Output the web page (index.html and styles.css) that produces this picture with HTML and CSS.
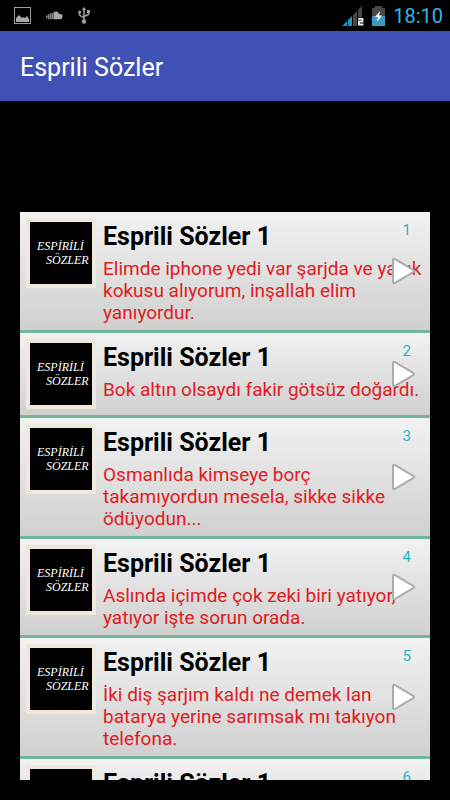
FILE: index.html
```html
<!DOCTYPE html>
<html lang="tr">
<head>
<meta charset="utf-8">
<meta name="viewport" content="width=device-width, initial-scale=1">
<title>Esprili Sözler</title>
<link rel="stylesheet" href="styles.css">
</head>
<body>
<svg class="defs" width="0" height="0" aria-hidden="true">
  <symbol id="play" viewBox="0 0 26 28"><path d="M3 3.2Q3 1.2 5 2.2L23.2 12.8Q25 14 23.2 15.2L5 25.8Q3 26.8 3 24.8Z" fill="#fff" stroke="#acacac" stroke-width="2" stroke-linejoin="round"/></symbol>
</svg>
<div class="status">
  <div class="status-left">
    <svg width="17" height="17" viewBox="0 0 17 17"><rect x=".5" y=".5" width="16" height="16" fill="none" stroke="#999"/><path d="M2 15V11L5 8L8 11L9 10L11 11L13 9L15 12V15Z" fill="#aaa"/></svg>
    <svg width="17" height="9" viewBox="0 0 17 9"><path d="M7.500 1.300Q12-.9 13 3Q16.700 2.700 16.600 5.500Q16.300 8.200 14 8.200H7.500Z" fill="#aaa"/><path d="M.7 4.500V7.200M2.600 3.300V8.200M4.600 2.300V8.200M6.500 2V8.200" stroke="#888" stroke-width="1.500"/></svg>
    <svg width="12" height="17" viewBox="0 0 12 17"><path d="M6 2V14M1.500 5V8L6 11M10.500 4.500V7.500L6 9.500" fill="none" stroke="#a0a0a0" stroke-width="1.500"/><path d="M6 0L8.200 3H3.800Z" fill="#a0a0a0"/><circle cx="6" cy="14.500" r="2.200" fill="#a0a0a0"/><circle cx="1.700" cy="5" r="1.500" fill="#a0a0a0"/><path d="M9 3h3v3H9Z" fill="#a0a0a0"/></svg>
  </div>
  <div class="status-right">
    <svg width="22" height="20" viewBox="0 0 22 20"><path d="M0 20L5 15V20ZM6 14L10 10V20H6Z" fill="#2492c8"/><path d="M11 9L15 5V20H11ZM16 4L20 0V20H16Z" fill="#484848"/><path d="M16 13H20.500V15.500H17V18.500H21.500" fill="none" stroke="#000" stroke-width="3"/><path d="M16 12.800H20.500V15.500H17V18.500H21.500" fill="none" stroke="#eee" stroke-width="1.800"/></svg>
    <svg width="13" height="20" viewBox="0 0 13 20"><path d="M3 0H10V2H13V10H0V2H3Z" fill="#484848"/><path d="M0 10H13V20H0Z" fill="#3a9cbd"/><path d="M8 5L3 11H6L5 16L10 9.500H7Z" fill="#fff"/></svg>
    <time>18:10</time>
  </div>
</div>
<header class="bar"><h1>Esprili Sözler</h1></header>
<main>
  <ul class="list">
    <li class="row">
      <div class="thumb"><span>ESPİRİLİ</span><span class="second">SÖZLER</span></div>
      <div class="body"><h2>Esprili Sözler 1</h2><p>Elimde iphone yedi var şarjda ve yanık kokusu alıyorum, inşallah elim yanıyordur.</p></div>
      <span class="num">1</span>
      <button class="play" aria-label="Oynat"><svg width="26" height="28"><use href="#play"/></svg></button>
    </li>
    <li class="row">
      <div class="thumb"><span>ESPİRİLİ</span><span class="second">SÖZLER</span></div>
      <div class="body"><h2>Esprili Sözler 1</h2><p>Bok altın olsaydı fakir götsüz doğardı.</p></div>
      <span class="num">2</span>
      <button class="play" aria-label="Oynat"><svg width="26" height="28"><use href="#play"/></svg></button>
    </li>
    <li class="row">
      <div class="thumb"><span>ESPİRİLİ</span><span class="second">SÖZLER</span></div>
      <div class="body"><h2>Esprili Sözler 1</h2><p>Osmanlıda kimseye borç takamıyordun mesela, sikke sikke ödüyodun...</p></div>
      <span class="num">3</span>
      <button class="play" aria-label="Oynat"><svg width="26" height="28"><use href="#play"/></svg></button>
    </li>
    <li class="row">
      <div class="thumb"><span>ESPİRİLİ</span><span class="second">SÖZLER</span></div>
      <div class="body"><h2>Esprili Sözler 1</h2><p>Aslında içimde çok zeki biri yatıyor, yatıyor işte sorun orada.</p></div>
      <span class="num">4</span>
      <button class="play" aria-label="Oynat"><svg width="26" height="28"><use href="#play"/></svg></button>
    </li>
    <li class="row">
      <div class="thumb"><span>ESPİRİLİ</span><span class="second">SÖZLER</span></div>
      <div class="body"><h2>Esprili Sözler 1</h2><p>İki diş şarjım kaldı ne demek lan batarya yerine sarımsak mı takıyon telefona.</p></div>
      <span class="num">5</span>
      <button class="play" aria-label="Oynat"><svg width="26" height="28"><use href="#play"/></svg></button>
    </li>
    <li class="row">
      <div class="thumb"></div>
      <div class="body"><h2>Esprili Sözler 1</h2></div>
      <span class="num">6</span>
      <button class="play" aria-label="Oynat"><svg width="26" height="28"><use href="#play"/></svg></button>
    </li>
  </ul>
</main>
</body>
</html>
```
FILE: styles.css
```css
* { box-sizing: border-box; }
body {
  margin: 0;
  height: 100vh;
  display: flex;
  flex-direction: column;
  background: #000;
  font-family: Roboto, "Liberation Sans", sans-serif;
  overflow: hidden;
}
h1, h2, p, ul { margin: 0; padding: 0; }
.defs { position: absolute; }
.status {
  flex: none;
  height: 31px;
  padding: 0 7px 0 14px;
  display: flex;
  align-items: center;
  justify-content: space-between;
}
.status-left { display: flex; align-items: center; gap: 15px; }
.status-right { display: flex; align-items: center; gap: 8px; }
.status time { color: #33b5e5; font-size: 20px; line-height: 30px; }
.bar {
  flex: none;
  height: 70px;
  padding: 4px 20px 0;
  display: flex;
  align-items: center;
  background: #3f51b5;
}
.bar h1 { color: #fff; font-size: 25px; font-weight: 400; line-height: 32px; }
main { flex: 1; min-height: 0; padding: 111px 20px 20px; display: flex; }
.list { flex: 1; list-style: none; overflow: hidden; }
.row {
  position: relative;
  display: flex;
  align-items: flex-start;
  gap: 7px;
  padding: 6px;
  background: linear-gradient(#f2f2f2, #d0d0d0);
  border-bottom: 3px solid #72b598;
}
.thumb {
  flex: none;
  width: 70px;
  height: 70px;
  padding: 17px 0 0 7px;
  border: 4px solid #eee9dc;
  background: #000;
  color: #fff;
  font: italic 12px/14px "Liberation Serif", serif;
  display: flex;
  flex-direction: column;
}
.thumb .second { padding-left: 9px; }
.body { flex: 1; min-width: 0; }
.body h2 { color: #000; font-size: 25px; font-weight: 700; line-height: 38px; margin-bottom: 2px; }
.body p { color: #e01b22; font-size: 19px; line-height: 22px; }
.num {
  position: absolute;
  top: 8px;
  right: 19px;
  color: #1fb9c9;
  font-size: 15px;
  line-height: 20px;
}
.play {
  position: absolute;
  top: 0;
  bottom: 0;
  right: 14px;
  padding: 0;
  border: 0;
  background: none;
  display: flex;
  align-items: center;
}
```
